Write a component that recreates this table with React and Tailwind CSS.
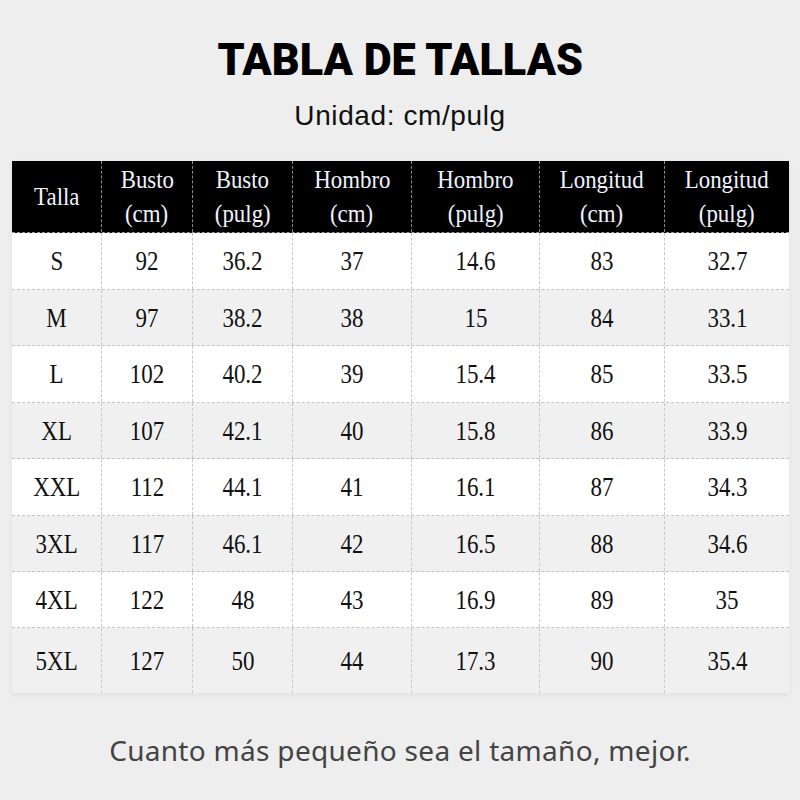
import React from "react"

const headers = [
  ["Talla"],
  ["Busto", "(cm)"],
  ["Busto", "(pulg)"],
  ["Hombro", "(cm)"],
  ["Hombro", "(pulg)"],
  ["Longitud", "(cm)"],
  ["Longitud", "(pulg)"],
]

const rows = [
  ["S", "92", "36.2", "37", "14.6", "83", "32.7"],
  ["M", "97", "38.2", "38", "15", "84", "33.1"],
  ["L", "102", "40.2", "39", "15.4", "85", "33.5"],
  ["XL", "107", "42.1", "40", "15.8", "86", "33.9"],
  ["XXL", "112", "44.1", "41", "16.1", "87", "34.3"],
  ["3XL", "117", "46.1", "42", "16.5", "88", "34.6"],
  ["4XL", "122", "48", "43", "16.9", "89", "35"],
  ["5XL", "127", "50", "44", "17.3", "90", "35.4"],
]

// row heights follow the picture (last row is a bit taller)
const rowHeights = ["h-[57px]", "h-[56px]", "h-[57px]", "h-[56px]", "h-[57px]", "h-[56px]", "h-[56px]", "h-[65px]"]

const cols = "grid grid-cols-[90px_91px_100px_119px_128px_125px_124px]"
const serif = "font-['Liberation_Serif','Noto_Sans_CJK_SC',serif]"

export default function App() {
  return (
    <div className="flex h-[800px] w-[800px] flex-col bg-[#eeeeee]">
      <h1 className="mt-[36px] text-center font-['Roboto','Liberation_Sans',sans-serif] text-[45px] font-black leading-[48px] text-black">
        <span className="inline-block scale-x-[0.96]">TABLA DE TALLAS</span>
      </h1>
      <p className="mt-[16px] text-center font-['Liberation_Sans',sans-serif] text-[28px] leading-[32px] tracking-[0.6px] text-[#111]">
        Unidad: cm/pulg
      </p>

      <div className={`ml-[12px] mt-[29px] w-[777px] bg-white shadow-[0_2px_6px_rgba(0,0,0,0.06)] ${serif}`}>
        <div className={`${cols} h-[72px] border-b border-dashed border-[#9a9a9a] bg-black text-[#eef3ff]`}>
          {headers.map((h, i) => (
            <div
              key={i}
              className={`flex flex-col items-center justify-center text-[26px] leading-[34px] ${i < 6 ? "border-r border-dashed border-[#8a8a8a]" : ""}`}
            >
              {h.map((t) => (
                <span key={t} className="inline-block scale-x-[0.88]">{t}</span>
              ))}
            </div>
          ))}
        </div>
        {rows.map((r, ri) => (
          <div
            key={ri}
            className={`${cols} ${rowHeights[ri]} ${ri % 2 ? "bg-[#f0f0f0]" : "bg-white"} ${ri < 7 ? "border-b border-dashed border-[#c4c4c4]" : ""} text-[#111]`}
          >
            {r.map((c, ci) => (
              <div
                key={ci}
                className={`flex items-center justify-center text-[28px] ${ci < 6 ? "border-r border-dashed border-[#c8c8c8]" : ""}`}
              >
                <span className="inline-block scale-x-[0.82]">{c}</span>
              </div>
            ))}
          </div>
        ))}
      </div>

      <p className="mt-[40px] text-center font-['Noto_Sans',sans-serif] text-[28px] leading-[34px] tracking-[0.3px] text-[#444]">
        Cuanto más pequeño sea el tamaño, mejor.
      </p>
    </div>
  )
}
